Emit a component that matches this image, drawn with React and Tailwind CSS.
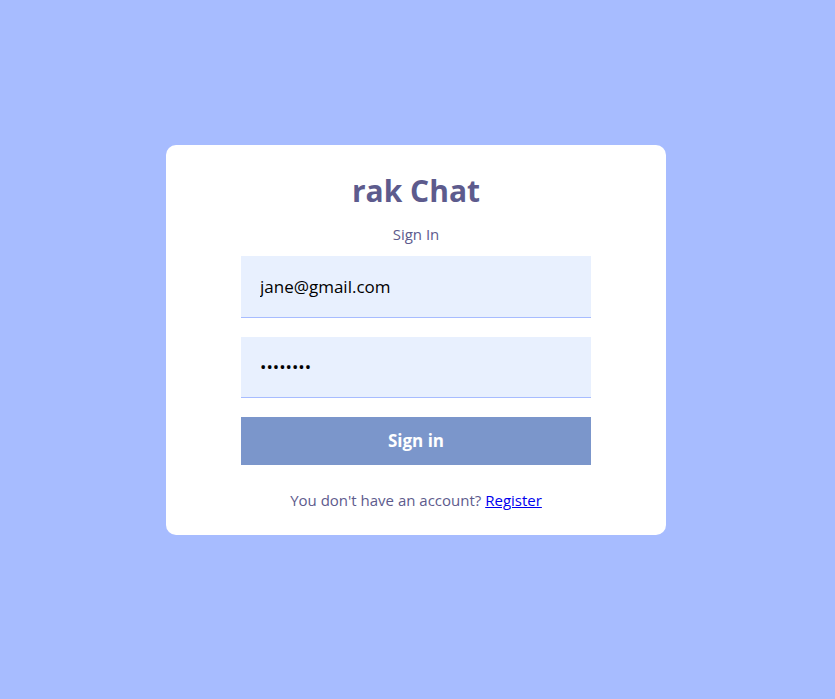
export default function App() {
  return (
    <div
      className="min-h-screen w-full bg-[#a7bcff] flex justify-center pt-[145px] pr-[3px]"
      style={{ fontFamily: '"Open Sans", sans-serif' }}
    >
      <div className="w-[500px] h-[390px] bg-white rounded-[10px] flex flex-col items-center pt-[25px]">
        <h1 className="text-[30px] leading-[42px] font-bold text-[#5d5b8d]">rak Chat</h1>
        <p className="mt-[12px] text-[15px] leading-[20px] text-[#5d5b8d]">Sign In</p>
        <form className="mt-[12px] w-[350px] flex flex-col gap-[19px]">
          <input
            type="email"
            defaultValue="jane@gmail.com"
            className="h-[61.5px] w-full px-[19px] bg-[#e8f0fe] border-b border-[#a7bcff] text-[17px] text-black outline-none"
          />
          <input
            type="password"
            defaultValue="password"
            className="h-[61.5px] w-full px-[19px] bg-[#e8f0fe] border-b border-[#a7bcff] text-[17px] text-black outline-none"
          />
          <button
            type="button"
            className="h-[48px] w-full bg-[#7b96cb] text-white font-bold text-[17px]"
          >
            Sign in
          </button>
        </form>
        <p className="mt-[25px] text-[15px] leading-[20px] text-[#5d5b8d]">
          You don't have an account?{" "}
          <a href="#" className="text-[#0000ee] underline">
            Register
          </a>
        </p>
      </div>
    </div>
  );
}
